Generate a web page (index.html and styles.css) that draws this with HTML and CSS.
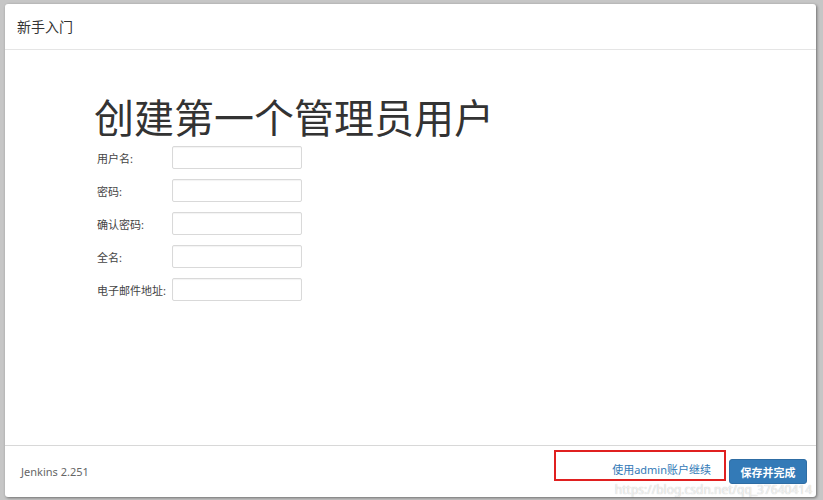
FILE: index.html
```html
<!DOCTYPE html>
<html lang="zh-CN">
<head>
  <meta charset="UTF-8">
  <meta name="viewport" content="width=device-width, initial-scale=1.0">
  <title>新手入门</title>
  <link rel="stylesheet" href="styles.css">
</head>
<body>
  <div class="dialog">
    <div class="dialog-header">新手入门</div>

    <div class="dialog-body">
      <h1>创建第一个管理员用户</h1>
      <form class="user-form" action="#" method="post">
        <label for="username">用户名:</label>
        <input type="text" id="username" name="username">

        <label for="password1">密码:</label>
        <input type="password" id="password1" name="password1">

        <label for="password2">确认密码:</label>
        <input type="password" id="password2" name="password2">

        <label for="fullname">全名:</label>
        <input type="text" id="fullname" name="fullname">

        <label for="email">电子邮件地址:</label>
        <input type="email" id="email" name="email">
      </form>
    </div>

    <div class="dialog-footer">
      <span class="version">Jenkins 2.251</span>
      <div class="actions">
        <a class="skip-link" href="#">使用admin账户继续</a>
        <button type="button" class="btn-primary">保存并完成</button>
      </div>
      <span class="watermark">https://blog.csdn.net/qq_37640414</span>
    </div>
  </div>
</body>
</html>
```

FILE: styles.css
```css
/* Ventana de configuración inicial */
html, body {
  margin: 0;
  height: 100%;
}

body {
  background: #c6c6c6;
  padding: 4px 7px 3px 5px;
  box-sizing: border-box;
  font-family: "Noto Sans", "Noto Sans CJK SC", sans-serif;
  color: #333;
}

.dialog {
  height: 100%;
  background: #fff;
  border-radius: 3px;
  box-shadow: 1px 1px 3px rgba(0, 0, 0, .45);
  display: flex;
  flex-direction: column;
}

.dialog-header {
  height: 45px;
  line-height: 45px;
  padding-left: 12px;
  font-size: 14px;
  color: #333;
  border-bottom: 1px solid #e5e5e5;
}

.dialog-body {
  flex: 1;
  padding: 43px 0 0 89px;
  border-bottom: 1px solid #d8d8d8;
}

.dialog-body h1 {
  margin: 0 0 3px 0;
  font-size: 40px;
  font-weight: normal;
  line-height: 50px;
  color: #333;
}

.user-form {
  display: grid;
  grid-template-columns: 78px 130px;
  grid-auto-rows: 23px;
  row-gap: 10px;
  align-items: center;
}

.user-form label {
  font-size: 11px;
  color: #444;
  padding-left: 3px;
}

.user-form input {
  height: 23px;
  box-sizing: border-box;
  border: 1px solid #d9d9d9;
  border-radius: 2px;
  box-shadow: inset 0 1px 1px rgba(0, 0, 0, .05);
  padding: 2px 5px;
  font-size: 12px;
}

.dialog-footer {
  position: relative;
  height: 51px;
  display: flex;
  align-items: center;
  justify-content: space-between;
  padding: 0 9px 0 16px;
}

.version {
  font-size: 11px;
  color: #666;
}

.actions {
  display: flex;
  align-items: center;
  gap: 3px;
}

.skip-link {
  display: block;
  width: 172px;
  height: 31px;
  box-sizing: border-box;
  border: 2px solid #e02020;
  padding: 9px 13px 0 0;
  text-align: right;
  font-size: 11px;
  color: #337ab7;
  text-decoration: none;
  margin-top: -13px;
}

.btn-primary {
  width: 78px;
  height: 25px;
  border: 1px solid #2e6da4;
  border-radius: 3px;
  background: #337ab7;
  color: #fff;
  font-family: inherit;
  font-size: 11px;
  font-weight: bold;
  padding: 0;
}

.watermark {
  position: absolute;
  right: 4px;
  bottom: 0;
  font-size: 12px;
  line-height: 14px;
  color: rgba(255, 255, 255, .75);
  text-shadow: 0 0 1px rgba(0, 0, 0, .3);
  pointer-events: none;
}
```
